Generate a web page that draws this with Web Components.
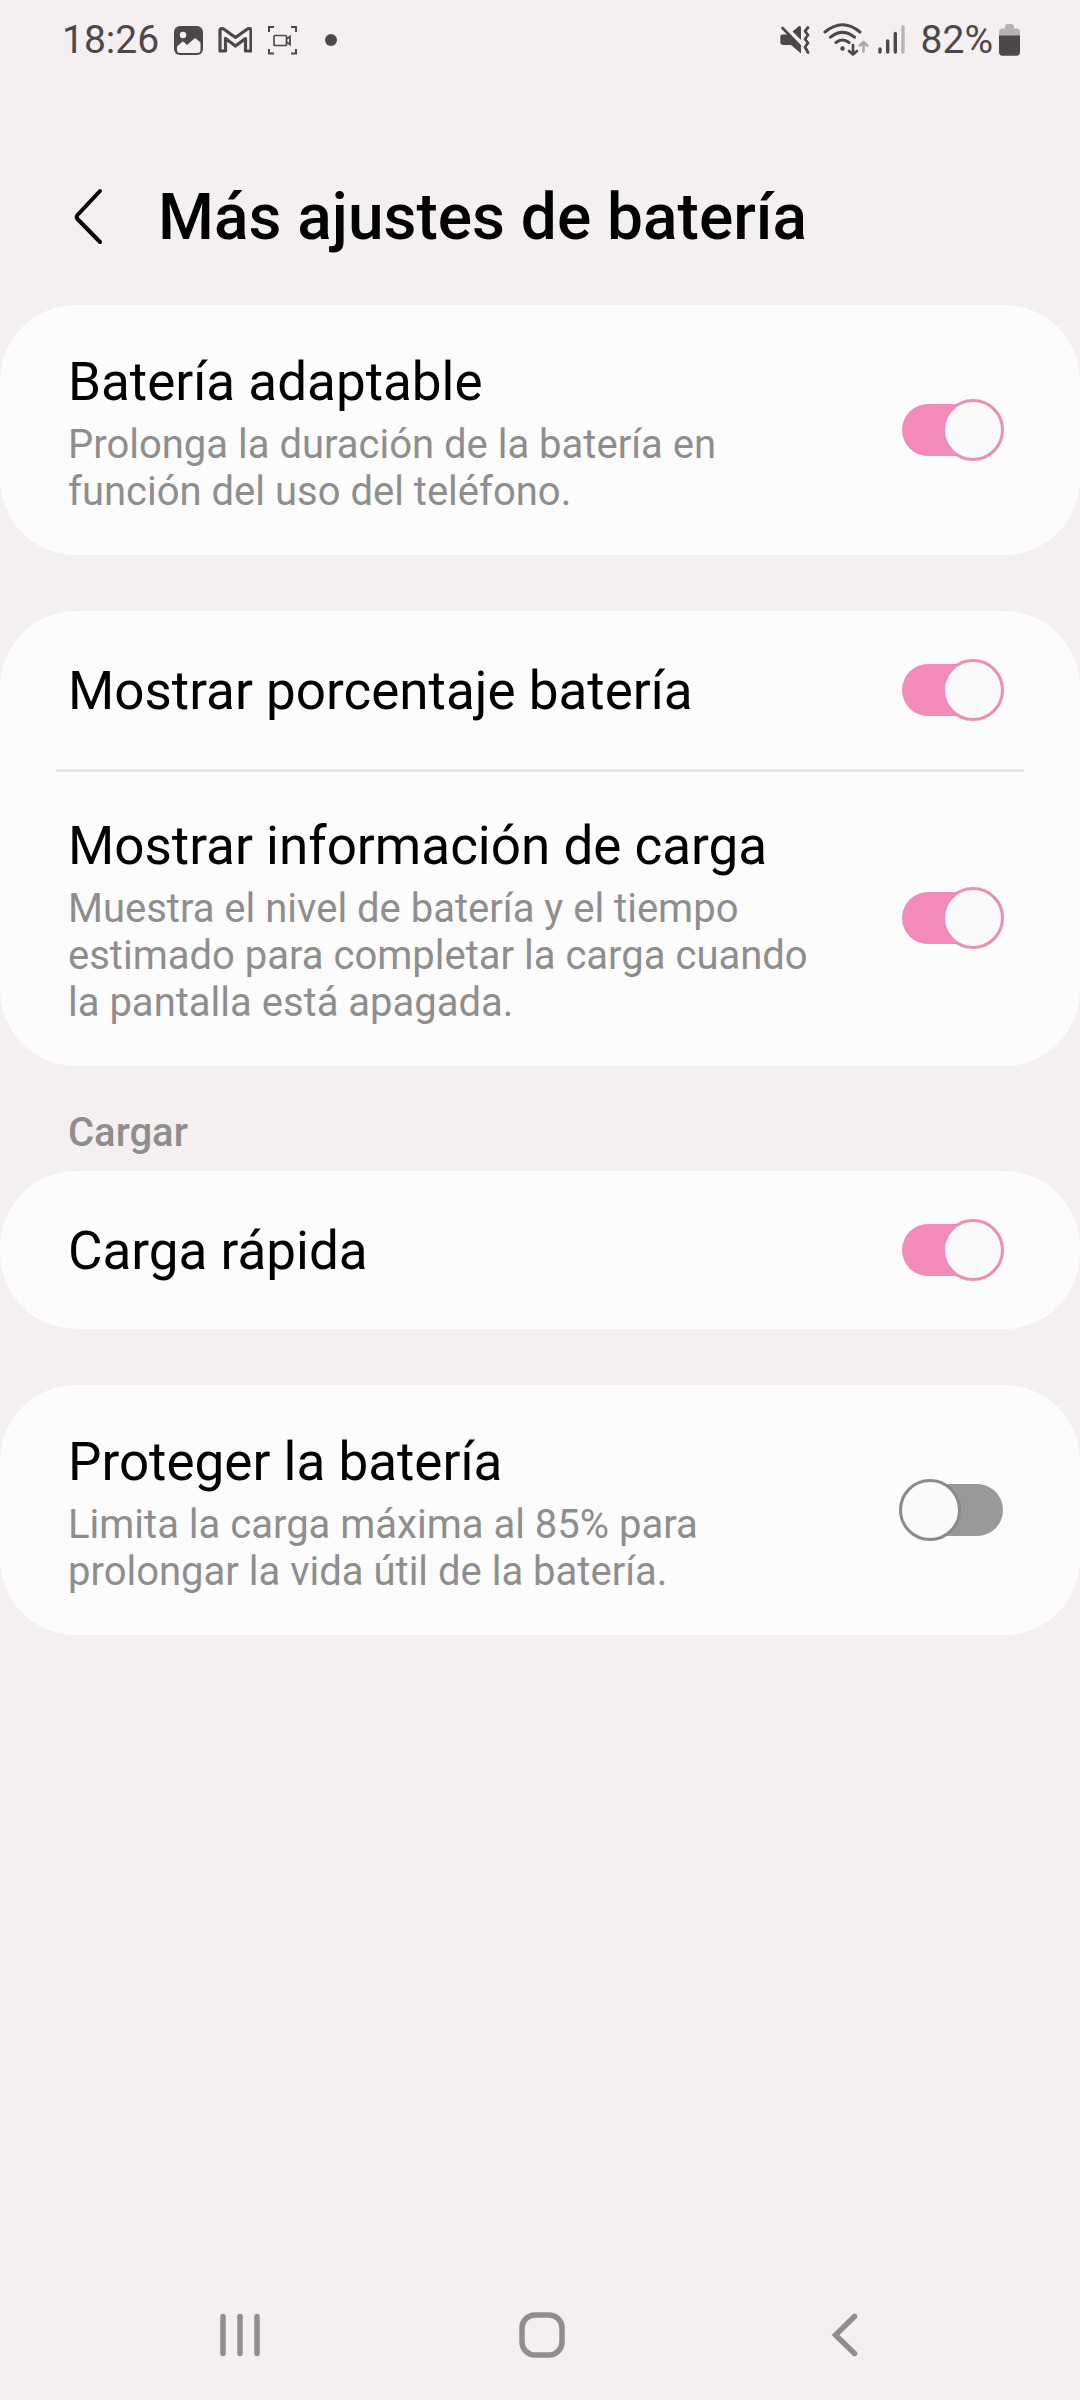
<!DOCTYPE html>
<html lang="es">
<head>
<meta charset="utf-8">
<meta name="viewport" content="width=device-width, initial-scale=1">
<title>Más ajustes de batería</title>
<style>
  :root {
    --bg: #f4eff1;
    --card: #fcfcfc;
    --ink: #000;
    --muted: #8e8e8e;
    --status: #4a4849;
    --accent: #f38bba;
  }
  body {
    margin: 0;
    min-height: 100vh;
    display: flex;
    flex-direction: column;
    background: var(--bg);
    color: var(--ink);
    font-family: Roboto, "Liberation Sans", sans-serif;
  }
  main { flex: 1; }
</style>
</head>
<body>
<status-bar></status-bar>
<page-header>Más ajustes de batería</page-header>
<main>
  <settings-card>
    <setting-row checked>Batería adaptable<span slot="description">Prolonga la duración de la batería en función del uso del teléfono.</span></setting-row>
  </settings-card>
  <settings-card spaced>
    <setting-row checked>Mostrar porcentaje batería</setting-row>
    <setting-row checked divided>Mostrar información de carga<span slot="description">Muestra el nivel de batería y el tiempo estimado para completar la carga cuando la pantalla está apagada.</span></setting-row>
  </settings-card>
  <section-title>Cargar</section-title>
  <settings-card>
    <setting-row checked>Carga rápida</setting-row>
  </settings-card>
  <settings-card spaced>
    <setting-row>Proteger la batería<span slot="description">Limita la carga máxima al 85% para prolongar la vida útil de la batería.</span></setting-row>
  </settings-card>
</main>
<navigation-bar></navigation-bar>

<script>
const define = (name, markup, setup) => {
  const template = document.createElement('template');
  template.innerHTML = markup;
  customElements.define(name, class extends HTMLElement {
    constructor() {
      super();
      this.attachShadow({ mode: 'open' }).append(template.content.cloneNode(true));
    }
    connectedCallback() {
      if (setup) setup(this, this.shadowRoot);
    }
  });
};

define('status-bar', `
  <style>
    :host { display: flex; justify-content: space-between; align-items: center; height: 80px;
            padding: 0 60px 0 62px; color: var(--status); font-size: 39px; line-height: 48px; }
    div { display: flex; align-items: center; }
    .left { gap: 15px; }
    .right { gap: 9px; }
    .battery { gap: 6px; }
    svg { display: block; height: 40px; }
  </style>
  <div class="left">
    <span>18:26</span>
    <svg viewBox="175 20 29 40" width="29" aria-hidden="true">
      <rect x="175" y="26" width="29" height="29" rx="6" fill="currentColor"/>
      <circle cx="184" cy="35" r="3.2" fill="#f4eff1"/>
      <path d="M178 46.5 183 42Q184 41.200 185 42L188 45 195.500 38.500Q196.500 38 197.500 39L201.500 42.500V50Q201.500 53 198.500 53H181Q178 53 178 50Z" fill="#f4eff1"/>
    </svg>
    <svg viewBox="219 20 34 40" width="34" aria-hidden="true">
      <path d="M221 51V30.500Q221 28.500 223 28.500 224 28.500 225 29.200L236.500 37.500 248 29.200Q249 28.500 250 28.500 252 28.500 252 30.500V51H246.500V38.500L236.500 46 226.500 38.500V51Z" fill="none" stroke="currentColor" stroke-width="3.200" stroke-linejoin="round"/>
    </svg>
    <svg viewBox="268 20 31 40" width="31" aria-hidden="true" fill="none" stroke="currentColor" stroke-width="2">
      <path d="M270 32V27H275M292 27H297V32M297 49V53.500H292M275 53.500H270V49"/>
      <rect x="275" y="35.500" width="12.500" height="10" rx="1" stroke-width="1.700"/>
      <path d="M287.500 39 291 36.500V44.500L287.500 42" stroke-width="1.700"/>
    </svg>
    <svg viewBox="314 20 24 40" width="24" aria-hidden="true"><circle cx="332" cy="40" r="6" fill="currentColor"/></svg>
  </div>
  <div class="right">
    <svg viewBox="780 20 34 40" width="34" aria-hidden="true">
      <path d="M782 34.500H788L801 47.500V53.500L791 45H783.500Q780.300 45 780.300 42V37Q780.300 34.500 782 34.500ZM792.500 31.500 799 26Q801 25.500 801 27.500V40Z" fill="currentColor"/>
      <path d="M782.500 28 800 46" stroke="currentColor" stroke-width="2.600" stroke-linecap="round"/>
      <path d="M808 27.500 805 31.200 808 35 805 39 808 43 805 47 808 52.500" fill="none" stroke="currentColor" stroke-width="2.800" stroke-linecap="round" stroke-linejoin="round"/>
    </svg>
    <svg viewBox="823 20 46 40" width="46" aria-hidden="true" fill="none" stroke="currentColor" stroke-width="3" stroke-linecap="round" stroke-linejoin="round">
      <path d="M825 32Q842.500 17.500 860 32M830.500 37.200Q842.500 27.500 854.500 37.200M836 42.500Q842.500 37.500 849 42.500"/>
      <circle cx="842.500" cy="48.500" r="2.200" fill="currentColor" stroke="none"/>
      <path d="M853 45V54M849 51 853 54.500 857 51" stroke-width="2.600"/>
      <path d="M863.500 51.500V42.500M859.800 45.500 863.500 42 867.200 45.500" stroke="#aaa8a9" stroke-width="2.600"/>
    </svg>
    <svg viewBox="878 20 34 40" width="34" aria-hidden="true" fill="none" stroke="currentColor" stroke-width="3.400" stroke-linecap="round">
      <path d="M880 49V52M887.700 41V52M895.300 33.500V52"/>
      <path d="M903 27V52" stroke="#b8b4b6"/>
    </svg>
    <div class="battery">
      <span>82%</span>
      <svg viewBox="999 20 21 40" width="21" aria-hidden="true">
        <path d="M999 36V32Q999 28.500 1002.500 28.500H1005V26.500Q1005 24 1007 24H1012Q1014 24 1014 26.500V28.500H1016.500Q1020 28.500 1020 32V36Z" fill="#b8b4b6"/>
        <path d="M999 35.500H1020V52Q1020 55.700 1016.500 55.700H1002.500Q999 55.700 999 52Z" fill="currentColor"/>
      </svg>
    </div>
  </div>
`);

define('page-header', `
  <style>
    :host { display: flex; align-items: center; gap: 54px; padding: 98px 60px 47px 68px; }
    button { display: block; padding: 0; border: 0; background: none; color: inherit; }
    svg { display: block; }
    h1 { margin: 0; font-size: 64px; line-height: 80px; font-weight: 500; }
  </style>
  <button type="button" aria-label="Atrás">
    <svg width="36" height="60" viewBox="0 0 36 60" fill="none" stroke="currentColor" stroke-width="4" stroke-linecap="round" stroke-linejoin="round"><path d="M32 3 9.500 27Q8 29 9.500 31L32 54"/></svg>
  </button>
  <h1><slot></slot></h1>
`);

define('settings-card', `
  <style>
    :host { display: block; background: var(--card); border-radius: 76px; }
    :host([spaced]) { margin-top: 56px; }
  </style>
  <slot></slot>
`);

define('section-title', `
  <style>
    :host { display: block; padding: 43px 68px 15px; color: var(--muted); }
    h2 { margin: 0; font-size: 40px; line-height: 47px; font-weight: 500; }
  </style>
  <h2><slot></slot></h2>
`);

define('setting-row', `
  <style>
    :host { display: block; }
    .rule { display: none; height: 3px; margin: 0 56px -3px; border: 0; background: #e8e8e8; }
    :host([divided]) .rule { display: block; }
    .row { display: flex; align-items: center; gap: 60px; min-height: 158px; padding: 0 76px 0 68px; }
    .text { flex: 1; padding: 42px 0 40px; }
    label { display: block; font-size: 53px; line-height: 70px; }
    p { margin: 4px 0 0; font-size: 40px; line-height: 47px; color: var(--muted); }
    p[hidden] { display: none; }
    input { appearance: none; display: grid; align-items: center; flex: none; width: 105px; height: 62px; margin: 0; }
    input::before { content: ""; grid-area: 1 / 1; height: 52px; margin: 0 1px 0 3px; border-radius: 26px; background: #999; }
    input::after { content: ""; grid-area: 1 / 1; box-sizing: border-box; width: 62px; height: 62px;
                   border: 3px solid #8b8b8b; border-radius: 50%; background: #fafafa; }
    input:checked::before { background: var(--accent); }
    input:checked::after { justify-self: end; border-color: #eb8fb8; }
  </style>
  <hr class="rule">
  <div class="row">
    <div class="text">
      <label for="toggle"><slot></slot></label>
      <p id="description"><slot name="description"></slot></p>
    </div>
    <input id="toggle" type="checkbox" role="switch" aria-describedby="description">
  </div>
`, (host, root) => {
  root.querySelector('input').checked = host.hasAttribute('checked');
  root.querySelector('p').hidden = !host.querySelector('[slot="description"]');
});

define('navigation-bar', `
  <style>
    :host { display: grid; grid-template-columns: repeat(3, 1fr); align-items: center; height: 130px;
            padding: 0 85px 0 89px; color: var(--muted); }
    button { display: grid; place-items: center; height: 100%; padding: 0; border: 0; background: none; color: inherit; }
    svg { display: block; }
  </style>
  <button type="button" aria-label="Recientes">
    <svg width="48" height="48" viewBox="0 0 48 48" fill="none" stroke="currentColor" stroke-width="5.500" stroke-linecap="round"><path d="M7 5.500V42.500M24 5.500V42.500M41 5.500V42.500"/></svg>
  </button>
  <button type="button" aria-label="Inicio">
    <svg width="48" height="48" viewBox="0 0 48 48" fill="none" stroke="currentColor" stroke-width="5.500"><rect x="4" y="4" width="40" height="40" rx="13"/></svg>
  </button>
  <button type="button" aria-label="Atrás">
    <svg width="48" height="48" viewBox="0 0 48 48" fill="none" stroke="currentColor" stroke-width="5.500" stroke-linecap="round"><path d="M34.500 5.500 15.500 24 34.500 42.500"/></svg>
  </button>
`);
</script>
</body>
</html>
